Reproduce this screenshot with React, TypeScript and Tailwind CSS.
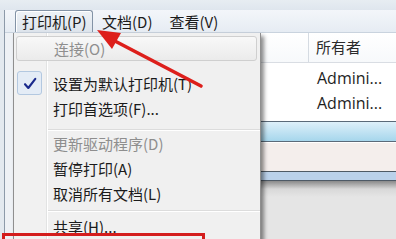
import React from 'react';

const cjk = "font-['Noto_Sans_CJK_SC',sans-serif]";

const MenuItem: React.FC<{ label: string; disabled?: boolean }> = ({ label, disabled }) => (
  <div className={`h-[25px] flex items-center pl-[39px] text-[15px] leading-none ${disabled ? 'text-[#8e8e8e]' : 'text-[#1b1b1b]'}`}>
    {label}
  </div>
);

const Separator: React.FC<{ top: number }> = ({ top }) => (
  <div className={top === 8 ? 'h-[10px] pt-[8px] pl-[34px]' : 'h-[8px] pt-[4px] pl-[34px]'}>
    <div className="border-t border-[#dcdcdc] border-b border-b-white" />
  </div>
);

const App: React.FC = () => {
  return (
    <div className={`relative w-[396px] h-[239px] overflow-hidden bg-[#e3e9ef] ${cjk}`}>
      {/* window frame top */}
      <div className="h-[10px] bg-[linear-gradient(#e7edf2,#dfe6ee)]" />

      <div className="ml-[4px] h-[229px] border-l border-[#8d9aa9] flex flex-col">
        {/* menu bar */}
        <div className="h-[23px] flex items-end bg-[linear-gradient(#f3f6fa,#e6ecf3)] border-b border-[#c9d3de] text-[15px] text-[#1b1b1b] leading-none">
          <div className="ml-[10px] w-[78px] h-[22px] flex items-center pl-[6px] rounded-t-[3px] border border-b-0 border-[#8393a6] bg-[linear-gradient(#eef2f6,#dde4ec)] shadow-[inset_1px_1px_0_#ffffff]">
            打印机(P)
          </div>
          <div className="ml-[9px] h-[22px] flex items-center">文档(D)</div>
          <div className="ml-[17px] h-[22px] flex items-center">查看(V)</div>
        </div>

        {/* list view */}
        <div className="flex-1 flex">
          <div className="w-[8px] bg-[#eef1f5]" />
          <div className="flex-1 flex flex-col bg-white">
            <div className="h-[30px] flex border-b border-[#d9dde3] bg-[linear-gradient(#ffffff,#f7f9fb)]">
              <div className="w-[248px] border-r border-[#dde3ea]" />
              <div className="w-[48px] border-r border-[#d5dbe2]" />
              <div className="pl-[7px] flex items-center text-[15px] text-[#2b2b2b]">所有者</div>
            </div>
            <div className="h-[58px] pt-[2px] font-['Open_Sans',sans-serif] text-[16px] text-[#1e1e1e]">
              <div className="h-[25px] flex items-center pl-[304px]">Admini...</div>
              <div className="h-[25px] flex items-center pl-[304px]">Admini...</div>
            </div>
            <div className="h-[21px] border-t border-b border-[#5b6a79] bg-[linear-gradient(#def0fa,#a6d6ec)]" />
            <div className="h-[29px] bg-[#f4eeec] border-t border-white" />
            <div className="h-[10px] border-t border-b border-[#4e5a66] bg-[#bad1ea]" />
            <div className="flex-1 bg-[linear-gradient(#8a8a8a,#d8d8d8_8px,#e5e5e5_16px)]" />
          </div>
        </div>
      </div>

      {/* dropdown menu */}
      <div className="absolute left-[13px] top-[33px] w-[248px] h-[215px] border border-t-0 border-[#8f8f8f] shadow-[3px_3px_4px_rgba(0,0,0,0.45)] bg-[linear-gradient(to_right,#f1f1f1_32px,#e2e3e3_32px,#e2e3e3_33px,#ffffff_33px,#ffffff_34px,#f0f0f0_34px)]">
        <div className="pt-[3px] px-[2px] pr-[3px]">
          <div className="h-[25px] flex items-center pl-[37px] text-[15px] leading-none text-[#8e8e8e] rounded-[3px] border border-[#cfcfcf] bg-[linear-gradient(#f8f8f8,#ebebeb)]">
            连接(O)
          </div>
        </div>
        <div className="mt-[10px] relative">
          <div className="absolute left-[3px] top-0 w-[25px] h-[24px] rounded-[3px] border border-[#b3c8e0] bg-[#e4ecf6] flex items-center justify-center">
            <svg width="14" height="13" viewBox="0 0 14 13">
              <path d="M2 7.2 L5.3 11 L12.3 1.8" fill="none" stroke="#1a2a8c" strokeWidth="2.1" strokeLinecap="round" strokeLinejoin="round" />
            </svg>
          </div>
          <MenuItem label="设置为默认打印机(T)" />
        </div>
        <MenuItem label="打印首选项(F)..." />
        <Separator top={8} />
        <MenuItem label="更新驱动程序(D)" disabled />
        <MenuItem label="暂停打印(A)" />
        <MenuItem label="取消所有文档(L)" />
        <Separator top={4} />
        <MenuItem label="共享(H)..." />
      </div>

      {/* red arrow annotation */}
      <svg className="absolute left-0 top-0" width="396" height="239" viewBox="0 0 396 239">
        <path d="M201 86 L113 40" stroke="#dd1f1b" strokeWidth="3.6" strokeLinecap="round" />
        <polygon points="97,30 121,33 112,49" fill="#dd1f1b" />
      </svg>

      {/* red highlight box */}
      <div className="absolute left-[2px] top-[233px] w-[203px] h-[20px] border-[3px] border-[#d41d1d]" />
    </div>
  );
};

export default App;
